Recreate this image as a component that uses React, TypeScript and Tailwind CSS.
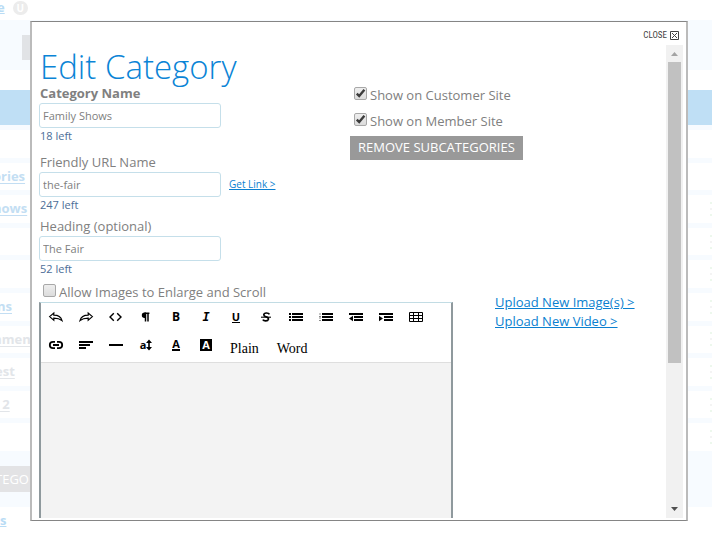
import type { ReactNode } from 'react';

const rows = [
  { text: '', tone: '' },
  { text: 'ories', tone: '-ml-[7px] text-[#c3def3]' },
  { text: 'hows', tone: '-ml-[7px] text-[#c3def3]' },
  { text: '', tone: '' },
  { text: '', tone: '' },
  { text: 'ns', tone: '-ml-[3px] text-[#c3def3]' },
  { text: 'mment', tone: '-ml-[11px] text-[#e2e5e9]' },
  { text: 'est', tone: '-ml-[5px] text-[#e2e5e9]' },
  { text: 'r 2', tone: '-ml-[7px] text-[#e2e5e9]' },
  { text: '', tone: '' },
];

function PageBehind() {
  return (
    <div className="text-[13px] font-bold" aria-hidden="true">
      <div className="flex h-5 items-start gap-2 leading-[15px]">
        <a href="#site" tabIndex={-1} className="-ml-[3px] text-[#b9dcf5] underline">e</a>
        <span className="mt-px flex h-[14px] w-[15px] items-center justify-center rounded-full bg-[#ececec] text-[10px] text-white">
          U
        </span>
      </div>
      <div className="h-[50px] bg-[#f7fbff] pt-[15px] pl-[22px]">
        <div className="h-[25px] w-10 bg-[#e1e3e6]" />
      </div>
      <div className="mt-5 h-[35px] bg-[#bfdff5]" />
      <div className="flex h-[326px] flex-col gap-[5px] bg-[#f7fbff] pt-[5px]">
        {rows.map((row, index) => (
          <div key={index} className="flex flex-1 items-center justify-between bg-white leading-[18px]">
            {row.text ? (
              <a href="#category" tabIndex={-1} className={`pb-px underline underline-offset-2 ${row.tone}`}>
                {row.text}
              </a>
            ) : (
              <span />
            )}
            {index > 1 && (
              <span className="flex flex-col gap-1">
                <i className="h-0.5 w-0.5 bg-[#edf8ed]" />
                <i className="h-0.5 w-0.5 bg-[#f4f4f4]" />
                <i className="h-0.5 w-0.5 bg-[#edf8ed]" />
              </span>
            )}
          </div>
        ))}
      </div>
      <div className="h-14 bg-[#f7fbff] pt-[15px]">
        <div className="h-[26px] w-20 bg-[#e3e3e5] font-normal leading-[26px] text-white">
          <span className="-ml-[5px]">TEGO</span>
        </div>
      </div>
      <a href="#more" tabIndex={-1} className="mt-1 block leading-[18px] text-[#b9dcf5] underline">s</a>
    </div>
  );
}

type FieldProps = {
  id: string;
  label: string;
  value: string;
  left: number;
  bold?: boolean;
  children?: ReactNode;
};

function Field({ id, label, value, left, bold, children }: FieldProps) {
  return (
    <div>
      <label htmlFor={id} className={`block pl-px leading-[15px] ${bold ? 'font-bold' : ''}`}>
        {label}
      </label>
      <div className="mt-0.5 flex items-center gap-2">
        <input
          id={id}
          type="text"
          defaultValue={value}
          className="h-[25px] w-[182px] rounded-[3px] border border-[#c5dfea] bg-white px-[3px] text-[11px] text-[#808080] outline-none"
        />
        {children}
      </div>
      <p className="pl-px text-[11px] leading-4 text-[#4d6e97]">{left} left</p>
    </div>
  );
}

function Check({ label, checked = false }: { label: string; checked?: boolean }) {
  return (
    <label className="flex items-start gap-[3px] leading-[15px]">
      <span className="relative -mt-px size-[13px]">
        <input
          type="checkbox"
          defaultChecked={checked}
          className="peer block size-[13px] appearance-none rounded-[2px] border border-[#a8a8a8] bg-linear-to-b from-[#eeeeee] to-[#dcdcdc]"
        />
        <svg
          viewBox="0 0 13 13"
          className="pointer-events-none absolute inset-0 hidden size-[13px] peer-checked:block"
          fill="none"
          stroke="#3c3c3c"
          strokeWidth="2.4"
        >
          <path d="M2.8 6.6 L5.2 9 L10.4 2.8" />
        </svg>
      </span>
      {label}
    </label>
  );
}

function Icon({ children }: { children: ReactNode }) {
  return (
    <svg viewBox="0 0 16 16" className="size-4" fill="none" stroke="currentColor" strokeWidth="1.2">
      {children}
    </svg>
  );
}

const letter = "font-['Open_Sans',sans-serif] text-[12px] font-bold leading-[12px]";

const tools: { name: string; icon: ReactNode }[] = [
  { name: 'Undo', icon: <Icon><path d="M1.6 7.6 L5.8 4 V6.1 C10 6.1 13 7.8 14 11.6 C11.8 9.8 9.4 9.2 5.8 9.2 V11.2 Z" /></Icon> },
  { name: 'Redo', icon: <Icon><path d="M14.4 7.6 L10.2 4 V6.1 C6 6.1 3 7.8 2 11.6 C4.2 9.8 6.6 9.2 10.2 9.2 V11.2 Z" /></Icon> },
  { name: 'HTML', icon: <Icon><path d="M5.8 4.2 L2 8 L5.8 11.8 M9.2 4.2 L13 8 L9.2 11.8" strokeWidth="1.4" /></Icon> },
  {
    name: 'Format',
    icon: (
      <Icon>
        <path d="M8 3.5 H6.5 A2.7 2.7 0 0 0 6.5 8.9 H8 Z" fill="currentColor" stroke="none" />
        <path d="M7.5 4 V12.5 M10 4 V12.5 M6.5 4.2 H11.4" strokeWidth="1.5" />
      </Icon>
    ),
  },
  { name: 'Bold', icon: <span className={letter}>B</span> },
  { name: 'Italic', icon: <span className="font-['DejaVu_Sans_Mono',monospace] text-[12px] font-bold italic leading-[12px]">I</span> },
  { name: 'Underline', icon: <span className="border-b border-black font-['Open_Sans',sans-serif] text-[11px] font-bold leading-[11px]">U</span> },
  {
    name: 'Strikethrough',
    icon: (
      <Icon>
        <path d="M11.4 5.4 C10.6 3.6 6 3.4 5.8 5.8 C5.8 6.8 6.6 7.4 8 7.8 C10 8.4 10.6 9 10.4 10.2 C9.8 12.4 5.8 12.2 4.8 10.6" strokeWidth="1.7" />
        <path d="M3 8.2 H13" strokeWidth="1.1" />
      </Icon>
    ),
  },
  {
    name: 'Bulleted list',
    icon: <Icon><path d="M1 5 H3 M1 8 H3 M1 11 H3 M4 5 H15 M4 8 H15 M4 11 H15" strokeWidth="2" /></Icon>,
  },
  {
    name: 'Numbered list',
    icon: (
      <Icon>
        <path d="M4 5 H15 M4 8 H15 M4 11 H15" strokeWidth="2" />
        <path d="M2 4 V6 M1 7.5 H3 M1 9 H3 M1 11.5 H3" stroke="#888888" strokeWidth="1" />
      </Icon>
    ),
  },
  {
    name: 'Outdent',
    icon: (
      <Icon>
        <path d="M1 5 H15 M6 8 H15 M6 11 H15" strokeWidth="2" />
        <path d="M1 9.5 L5 6.8 V12.2 Z" fill="currentColor" stroke="none" />
      </Icon>
    ),
  },
  {
    name: 'Indent',
    icon: (
      <Icon>
        <path d="M1 5 H15 M6 8 H15 M6 11 H15" strokeWidth="2" />
        <path d="M5 9.5 L1 6.8 V12.2 Z" fill="currentColor" stroke="none" />
      </Icon>
    ),
  },
  {
    name: 'Table',
    icon: <Icon><path d="M1.5 3.5 H14.5 V12.5 H1.5 Z M1.5 6.5 H14.5 M1.5 9.5 H14.5 M5.5 3.5 V12.5 M10.5 3.5 V12.5" strokeWidth="1" /></Icon>,
  },
  {
    name: 'Link',
    icon: (
      <Icon>
        <path d="M7 4.8 H5 A3.1 3.1 0 0 0 5 11.2 H7 M9 4.8 H11 A3.1 3.1 0 0 1 11 11.2 H9 M5 8 H11" strokeWidth="1.8" />
      </Icon>
    ),
  },
  { name: 'Alignment', icon: <Icon><path d="M1 5 H15 M1 8 H12 M1 11 H8" strokeWidth="2" /></Icon> },
  { name: 'Horizontal rule', icon: <Icon><path d="M1 8 H15" strokeWidth="2" /></Icon> },
  {
    name: 'Font size',
    icon: (
      <span className="flex items-center text-[11px] font-bold leading-[12px]">
        a
        <svg viewBox="0 0 6 12" className="h-3 w-1.5" fill="currentColor">
          <path d="M3 0.5 L6 4 H3.8 V8 H6 L3 11.5 L0 8 H2.2 V4 H0 Z" />
        </svg>
      </span>
    ),
  },
  { name: 'Text color', icon: <span className="border-b-2 border-black text-[11px] font-bold leading-[10px]">A</span> },
  {
    name: 'Background color',
    icon: <span className="flex size-3 items-center justify-center bg-black text-[11px] font-bold text-white">A</span>,
  },
];

function Editor() {
  return (
    <div className="flex flex-1 flex-col border-x-2 border-t border-x-[#8f999d] border-t-[#c2dce4] bg-[#f3f3f3]">
      <div className="flex flex-wrap border-b border-[#dedede] bg-white pb-[3px] text-black">
        {tools.map((tool) => (
          <button key={tool.name} type="button" aria-label={tool.name} className="flex h-7 w-[30px] items-center justify-center">
            {tool.icon}
          </button>
        ))}
        {['Plain', 'Word'].map((name) => (
          <button key={name} type="button" className="h-7 px-[9px] pt-1.5 font-['Liberation_Serif',serif] text-[14px]">
            {name}
          </button>
        ))}
      </div>
      <div contentEditable suppressContentEditableWarning role="textbox" aria-label="Description" className="flex-1 outline-none" />
    </div>
  );
}

function Scrollbar() {
  return (
    <div className="flex w-[17px] flex-col items-center bg-[#f1f1f1]" aria-hidden="true">
      <svg viewBox="0 0 17 17" className="size-[17px]" fill="#a3a3a3">
        <path d="M8.5 7 L12 11 H5 Z" />
      </svg>
      <div className="w-[13px] grow-[301] bg-[#c1c1c1]" />
      <div className="grow-[138]" />
      <svg viewBox="0 0 17 17" className="size-[17px]" fill="#505050">
        <path d="M5 6 H12 L8.5 10 Z" />
      </svg>
    </div>
  );
}

export default function App() {
  return (
    <div className="relative h-screen overflow-hidden bg-white font-['Open_Sans',sans-serif]">
      <PageBehind />
      <div
        role="dialog"
        aria-label="Edit Category"
        className="absolute top-[21px] right-6 bottom-[14px] left-[30px] flex flex-col border-x-2 border-y border-x-[#bbbbbb] border-y-[#858585] bg-white pb-0.5 text-[13px] text-[#808080]"
      >
        <div className="flex h-[23px] justify-end pt-1 pr-[7px]">
          <button type="button" className="flex items-center gap-[3px] font-['Roboto_Condensed',Roboto,sans-serif] text-[9px] text-[#444444]">
            CLOSE
            <svg viewBox="0 0 9 9" className="size-[9px]" fill="none" stroke="currentColor">
              <path d="M0.5 0.5 H8.5 V8.5 H0.5 Z M2 2 L7 7 M7 2 L2 7" />
            </svg>
          </button>
        </div>
        <div className="flex min-h-0 flex-1 pr-[3px]">
          <div className="flex min-w-0 flex-1 flex-col overflow-hidden pl-[7px]">
            <h1 className="pt-0.5 pl-px text-[33px] font-light leading-[39px] text-[#0a84d6]">Edit Category</h1>
            <div className="flex">
              <div className="w-[311px]">
                <Field id="name" label="Category Name" value="Family Shows" left={18} bold />
                <div className="mt-[11px]">
                  <Field id="url" label="Friendly URL Name" value="the-fair" left={247}>
                    <a href="#link" className="text-[10px] text-[#0a7fd0] underline">Get Link &gt;</a>
                  </Field>
                </div>
                <div className="mt-1.5">
                  <Field id="heading" label="Heading (optional)" value="The Fair" left={52} />
                </div>
              </div>
              <div className="flex flex-col items-start pt-0.5">
                <div className="flex flex-col gap-[11px] pl-1">
                  <Check label="Show on Customer Site" checked />
                  <Check label="Show on Member Site" checked />
                </div>
                <button type="button" className="mt-[7px] h-6 bg-[#999999] px-2 text-white">
                  REMOVE SUBCATEGORIES
                </button>
              </div>
            </div>
            <div className="mt-2 flex flex-1 gap-[42px]">
              <div className="flex w-[414px] flex-col">
                <div className="mb-0.5 pl-1">
                  <Check label="Allow Images to Enlarge and Scroll" />
                </div>
                <Editor />
              </div>
              <div className="flex flex-col items-start pt-2 leading-[19px] text-[#0a7fd0]">
                <a href="#image" className="underline">Upload New Image(s) &gt;</a>
                <a href="#video" className="underline">Upload New Video &gt;</a>
              </div>
            </div>
          </div>
          <Scrollbar />
        </div>
      </div>
    </div>
  );
}
